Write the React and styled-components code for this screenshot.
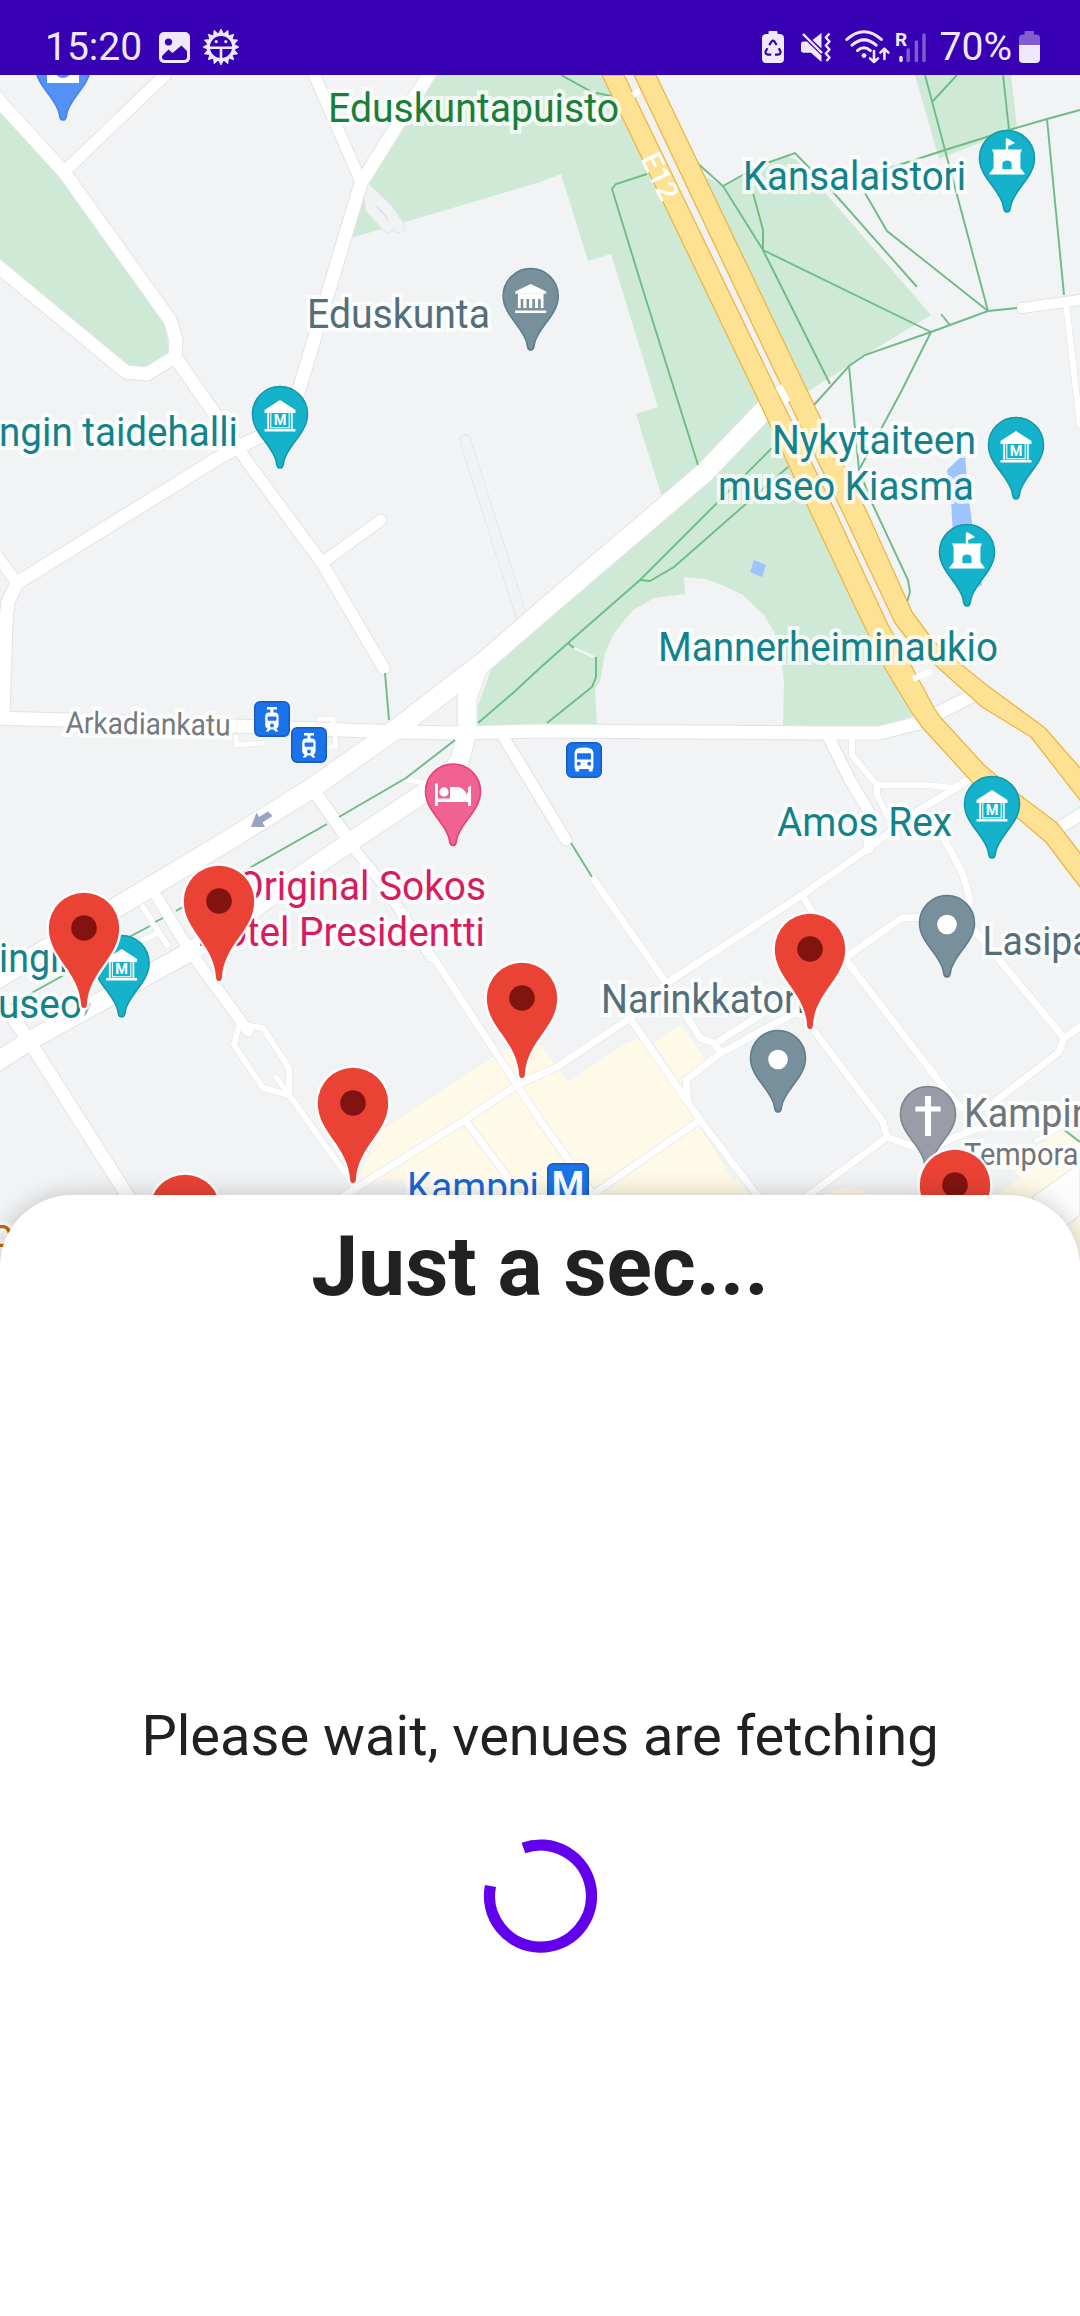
import React from "react";
import styled, { createGlobalStyle } from "styled-components";

const GlobalStyle = createGlobalStyle`
  html, body { margin: 0; padding: 0; background: #fff; }
  * { box-sizing: border-box; }
`;

const Screen = styled.main`
  display: flex;
  flex-direction: column;
  width: 1080px;
  height: 2316px;
  overflow: hidden;
  background: #fff;
  font-family: Roboto, "Noto Sans", sans-serif;
`;

/* ---------- status bar ---------- */

const StatusBar = styled.header`
  display: flex;
  justify-content: space-between;
  flex: none;
  height: 75px;
  padding: 19px 40px 0 45px;
  background: #3700b3;
  color: #efe9fb;
`;

const StatusGroup = styled.div`
  display: flex;
  align-items: center;
  height: 56px;
`;

const StatusText = styled.span`
  font-size: 39px;
  line-height: 56px;
  margin-right: ${(p) => p.$after}px;
`;

const StatusIcon = styled.svg`
  display: block;
  flex: none;
  overflow: visible;
  width: ${(p) => p.$w}px;
  height: ${(p) => p.$h}px;
  margin-right: ${(p) => p.$after || 0}px;
`;

const INK = "#efe9fb";
const BAR = "#3700b3";

function GalleryIcon() {
  return (
    <StatusIcon $w={31} $h={31} $after={13} viewBox="0 0 31 31">
      <rect width="31" height="31" rx="5" fill={INK} />
      <circle cx="9.5" cy="10" r="3.6" fill={BAR} />
      <path d="M3 24 L9.5 17.5 L13.5 21 L22.5 13.5 L28 19 V25 Q28 28 25 28 H6 Q3 28 3 25 Z" fill={BAR} />
    </StatusIcon>
  );
}

function BugGearIcon() {
  const teeth = Array.from({ length: 16 }, (_, i) => i * 22.5);
  return (
    <StatusIcon $w={36} $h={36} viewBox="-18 -18 36 36">
      {teeth.map((a) => (
        <path key={a} d="M-2.6 -13 L0 -18 L2.6 -13 Z" fill={INK} stroke={INK} strokeWidth="0.8" transform={`rotate(${a})`} />
      ))}
      <circle r="12.6" fill={BAR} stroke={INK} strokeWidth="3" />
      <path d="M-12 0.8 H12 M0 0.8 V12" stroke={INK} strokeWidth="2.6" />
      <circle cx="-4.8" cy="-5.4" r="1.6" fill={INK} />
      <circle cx="4.8" cy="-5.4" r="1.6" fill={INK} />
    </StatusIcon>
  );
}

function BatteryRecycleIcon() {
  return (
    <StatusIcon $w={22} $h={32} $after={17} viewBox="0 0 22 32">
      <path d="M6.5 3 V1 Q6.5 0 7.5 0 H14.5 Q15.5 0 15.5 1 V3 H18 Q22 3.4 22 7 V28 Q22 32 18 32 H4 Q0 32 0 28 V7 Q0 3.4 4 3 Z" fill={INK} />
      <g fill="none" stroke={BAR} strokeWidth="2.2">
        <path d="M7.2 14.2 L9.6 10.4 Q11 8.8 12.4 10.4 L14.6 14" />
        <path d="M16.8 17.2 L18.4 20.2 Q19 23.4 16 23.6 H13" />
        <path d="M9.2 23.6 H6 Q3 23.4 3.6 20.4 L5.4 17.2" />
      </g>
    </StatusIcon>
  );
}

function MuteVibrateIcon() {
  return (
    <StatusIcon $w={30} $h={30} $after={14} viewBox="0 0 30 30">
      <path d="M0 12 Q0 9.5 2.5 9.5 H6 L20.5 23.5 V30 L10 20.8 H2.5 Q0 20.8 0 18 Z" fill={INK} />
      <path d="M11.5 8 L20.5 1 V16.5 Z" fill={INK} />
      <path d="M2 2 L21 21" stroke={INK} strokeWidth="2.4" />
      <path d="M28.5 1.5 L24.8 5.5 L28.5 9.5 L24.8 13.5 L28.5 17.5 L24.8 21.5 L28.5 25.5 L25.5 29" fill="none" stroke={INK} strokeWidth="2.5" strokeLinejoin="round" />
    </StatusIcon>
  );
}

function WifiIcon() {
  return (
    <StatusIcon $w={44} $h={34} $after={7} viewBox="0 0 44 34">
      <g fill="none" stroke={INK} strokeWidth="3" strokeLinecap="round">
        <path d="M1.8 9.4 Q19 -6 36.4 9.4" />
        <path d="M7 15.2 Q19 4.6 31.2 15.2" />
        <path d="M12.4 20.6 Q19 14.8 25.4 20.6" />
      </g>
      <circle cx="19" cy="25.6" r="2.4" fill={INK} />
      <g fill="none" stroke={INK} strokeWidth="2.6" strokeLinecap="round" strokeLinejoin="round">
        <path d="M29 21 V31.6 M25 28.4 L29 32 L33 28.4" />
        <path d="M39.4 29 V19 M35.4 22.6 L39.4 18.8 L43.4 22.6" />
      </g>
    </StatusIcon>
  );
}

const RoamingText = styled.text`
  font: 700 19px Roboto, sans-serif;
  fill: ${INK};
`;

function SignalIcon() {
  return (
    <StatusIcon $w={30} $h={31} $after={14} viewBox="0 0 30 31">
      <RoamingText x="-1" y="13.5">R</RoamingText>
      <path d="M5 25.5 V28.5" stroke={INK} strokeWidth="3.4" strokeLinecap="round" />
      <path d="M12.2 18 V28.5 M20.4 10 V28.5 M28 3 V28.5" stroke={INK} strokeOpacity="0.4" strokeWidth="3.4" strokeLinecap="round" />
    </StatusIcon>
  );
}

function BatteryIcon() {
  return (
    <StatusIcon $w={21} $h={32} viewBox="0 0 21 32">
      <path d="M0 14 V7 Q0 3.4 4 3.4 H5.5 V1 Q5.5 0 6.5 0 H14 Q15 0 15 1 V3.4 H17 Q21 3.4 21 7 V14 Z" fill={INK} fillOpacity="0.4" />
      <path d="M0 14 H21 V28 Q21 32 17 32 H4 Q0 32 0 28 Z" fill={INK} />
    </StatusIcon>
  );
}

/* ---------- map ---------- */

const MapArea = styled.section`
  flex: none;
  height: 1120px;
  background: #f1f3f4;
`;

const MapCanvas = styled.svg`
  display: block;
  width: 1080px;
  height: 1260px;
`;

const MapLabel = styled.text`
  font-family: Roboto, sans-serif;
  font-size: ${(p) => p.$size || 40.5}px;
  fill: ${(p) => p.$color};
  stroke: rgba(255, 255, 255, 0.75);
  stroke-width: 8px;
  stroke-linejoin: miter;
  stroke-miterlimit: 2;
  paint-order: stroke;
`;

const PlainLabel = styled.text`
  font-family: Roboto, sans-serif;
  font-weight: ${(p) => p.$weight || 500};
  font-size: ${(p) => p.$size}px;
  fill: #fff;
`;

const TEAL = "#12838c";
const SLATE = "#546e7a";
const GREY = "#70757a";
const PINK = "#d81b60";

const parks = [
  "436,75 602,75 764,410 704,473 662,497 636,414 658,407 611,254 588,261 561,174 540,182 351,238 361,183",
  "764,410 710,480 540,627 492,667 478,705 478,728 879,728 915,715 886,670 855,607 807,505",
  "0,112 62,176 165,322 170,355 147,366 128,366 0,258",
  "703,175 723,186 788,156 797,160 931,315 865,355 807,392",
  "915,75 1011,75 1017,128 939,159",
];

const plaza =
  "597,728 595,688 600,682 605,653 614,633 633,610 654,598 685,594 684,577 705,579 722,585 743,595 764,615 774,632 782,663 784,683 783,728";

const blocks = [
  "382,1130 499,1053 522,1040 542,1047 568,1082 624,1044 640,1038 688,1108 733,1180 740,1177 752,1200 340,1200 358,1177",
  "654,1043 681,1024 707,1062 685,1078 686,1092",
  "826,1196 835,1190 846,1188 860,1190 872,1196",
  "995,1196 1020,1178 1008,1163 1046,1140 1060,1129 1080,1143 1080,1170 1032,1200",
  "1080,1215 1062,1228 1080,1270",
];

const water = [
  "947,470 962,456 965,456 969,500 973,530 982,585 978,587 953,535 951,500",
  "754,560 766,565 762,577 750,572",
];

const roads = [
  [6, "1066,303 1080,425"],
  [6, "852,735 852,755 877,785 926,785 953,788 972,777"],
  [6, "877,785 877,795 888,817"],
  [7, "975,775 953,790 919,810 869,848 802,895 667,983 630,1018 557,1067 517,1085 465,1120 356,1188 325,1208"],
  [7, "802,895 815,916"],
  [7, "815,1032 883,1122 887,1137 925,1151 960,1135 1000,1120"],
  [7, "887,1137 805,1198"],
  [7, "716,1043 760,1015 846,957 902,918 922,917 947,905"],
  [7, "846,960 955,1102 962,1108 988,1107 1059,1052 1064,1038 1080,1027"],
  [7, "976,932 1064,1038"],
  [7, "943,837 962,872 969,895 969,910"],
  [7, "592,877 669,987 700,1038 714,1043 721,1053"],
  [7, "800,1010 721,1053 686,1080 688,1100"],
  [7, "630,1018 700,1120 762,1202"],
  [7, "700,1120 592,1195"],
  [7, "434,958 517,1085 540,1120 597,1200"],
  [7, "465,1120 506,1175 518,1200"],
  [6, "289,1095 355,1187"],
  [6, "243,1025 263,1028 289,1068 289,1095 263,1088 234,1045 239,1025"],
  [5, "276,1077 289,1095"],
  [5, "236,737 236,745 263,743"],
  [5, "319,719 333,719 336,747 325,747"],
  [6, "143,907 167,945"],
  [5, "143,940 158,933"],
  [5, "403,779 425,783"],
  [4, "1036,1141 1062,1127"],
  [10, "355,850 382,883 431,957"],
  [11, "504,738 540,797 566,840"],
  [11, "829,738 850,780 869,812 869,848"],
  [10, "1022,308 1080,300"],
  [11.5, "238,447 246,460 322,563 384,669"],
  [11, "322,563 381,520"],
  [11.5, "165,75 64,172"],
  [13, "-5,95 0,102 64,172 170,320 176,340 175,357 238,447"],
  [13, "-5,264 0,268 126,372 147,374 175,357"],
  [11, "310,65 361,182"],
  [13, "433,68 361,183 298,393 285,425 238,447 215,460 17,583 8,602 6,620 3,718"],
  [11, "-3,556 17,583"],
  [11, "157,897 189,950 248,1031"],
  [12.5, "312,788 350,842"],
  [13, "8,1010 33,1047 129,1198 160,1250"],
  [12, "1054,831 1085,812"],
  [13, "-5,718 69,720 400,732 458,733 540,731 826,733 879,733 919,723 970,697"],
  [18.5, "478,668 467,698 467,733 459,763 436,785 350,842 193,950 31,1040 -5,1063"],
  [19.5, "772,402 704,473 540,613 486,660 399,727 312,788 229,840 -5,980"],
];

const alleys = [
  [10, "465,440 522,618"],
  [10, "369,192 371,209 388,227"],
  [10.5, "367,190 387,209 399,227"],
];

const paths = [
  "561,75 592,92 611,96",
  "647,174 616,184 612,189 643,290 698,465",
  "695,161 723,186 763,250 830,384",
  "723,186 741,176 767,163 795,153 833,192 917,287",
  "941,314 950,325",
  "753,193 763,230 763,250 931,332",
  "814,405 849,366 865,355 931,332 988,311 1017,308",
  "849,366 859,470 872,503 908,580 910,592 907,602",
  "931,332 902,390 859,470",
  "865,193 887,231 988,311",
  "925,75 945,150 988,311",
  "933,101 957,75",
  "1003,75 1009,130",
  "865,176 945,150 1009,130 1047,119 1080,110",
  "1047,119 1064,295",
  "772,448 640,580 568,643 540,668 513,693 478,723",
  "788,467 674,567 650,581 640,580",
  "568,643 574,648",
  "596,657 596,677 592,687 547,723",
  "385,673 389,720",
  "455,740 406,778 339,817",
  "327,824 253,866 176,911",
  "163,918 155,922",
  "150,926 129,937",
  "64,975 10,1005",
  "571,843 592,877",
  "1063,1129 1080,1142",
];

const median = "624,75 634,75 793,410 843,513 895,623 912,645 912,667 888,625 836,513 781,400";
const carriageways = [
  "602,75 624,75 786,410 836,513 888,625 912,667 934,708 941,718 984,765 1017,793 1057,823 1080,853 1100,880 1100,915 1080,887 1046,842 1020,820 972,782 922,727 912,713 886,670 855,607 807,505 764,412",
  "634,75 656,75 818,413 867,512 912,612 934,642 984,683 1045,728 1080,768 1100,790 1100,822 1080,800 1031,737 982,707 933,663 912,645 895,623 843,513 793,410",
];

const POI_PATH =
  "M0 0 C-2.6 0 -3 -2 -3.6 -5.5 C-6 -22 -27.5 -34 -27.5 -54 A27.5 27.5 0 0 1 27.5 -54 C27.5 -34 6 -22 3.6 -5.5 C3 -2 2.6 0 0 0 Z";
const VENUE_PATH =
  "M0 0 C-2 0 -2.6 -1 -2.8 -3 C-5 -38 -35.2 -50 -35.2 -80 A35.2 35.2 0 0 1 35.2 -80 C35.2 -50 5 -38 2.8 -3 C2.6 -1 2 0 0 0 Z";

const poiColors = {
  teal: ["#14b3cb", "#1598a8"],
  slate: ["#78909c", "#5f7d8a"],
  grey: ["#9a9da8", "#7f848c"],
  pink: ["#f06292", "#e54079"],
  blue: ["#5491f5", "#4a84e8"],
};

function MuseumGlyph() {
  return (
    <g>
      <path d="M0 -68 L15.5 -58 V-55 H-15.5 V-58 Z M-15.5 -39 H15.5 V-36.5 H-15.5 Z" fill="#fff" />
      <path d="M-11.8 -55 V-38 M11.8 -55 V-38" stroke="#fff" strokeWidth="1.8" />
      <rect x="-9.2" y="-56.4" width="18.4" height="16.2" fill="none" stroke="#fff" strokeWidth="1.1" />
      <PlainLabel x="0" y="-43" $size={14.5} $weight={700} textAnchor="middle">M</PlainLabel>
    </g>
  );
}

function CastleGlyph() {
  return (
    <path
      d="M-1.2 -73.5 H1 L8.2 -69 L1.2 -66 V-62.5 H15 L13.4 -58.5 V-44 L17.6 -38.5 V-37.5 H-17.6 V-38.5 L-13.4 -44 V-58.5 L-15 -62.5 H-1.2 Z M-4.6 -42.8 H4.6 V-48 Q4.6 -51.6 0 -51.6 Q-4.6 -51.6 -4.6 -48 Z"
      fill="#fff"
      fillRule="evenodd"
    />
  );
}

function ParliamentGlyph() {
  return (
    <g fill="#fff">
      <path d="M0 -66 L15.5 -58.4 V-56.2 H-15.5 V-58.4 Z M-15.5 -39.6 H15.5 V-37 H-15.5 Z" />
      <path d="M-12.800 -56.500 H12.800 V-42 H10 V-51 H1.600 V-42 H-1.600 V-51 H-10 V-42 H-12.800 Z" />
      <path d="M-7.400 -51 H-4.200 V-42 H-7.400 Z M4.200 -51 H7.400 V-42 H4.200 Z" />
    </g>
  );
}

function BedGlyph() {
  return (
    <g fill="#fff">
      <path d="M-18 -62 H-15.2 V-47 H15.2 V-58 L18 -60 V-39.6 H15.2 V-43.4 H-15.2 V-39.6 H-18 Z" />
      <circle cx="-9" cy="-53.6" r="4.6" />
      <path d="M-3 -58.6 H5 Q12 -57 13.6 -51 L15.8 -55 V-46 H-3 Z" />
    </g>
  );
}

const glyphs = {
  museum: <MuseumGlyph />,
  castle: <CastleGlyph />,
  parliament: <ParliamentGlyph />,
  bed: <BedGlyph />,
  dot: <circle cy="-52.5" r="9.8" fill="#fff" />,
  cross: <path d="M-3 -72 H3 V-61.6 H12.6 V-56.4 H3 V-32 H-3 V-56.4 H-12.6 V-61.6 H-3 Z" fill="#fff" />,
  camera: (
    <g>
      <rect x="-16" y="-58" width="32" height="21" fill="#fff" />
      <circle cy="-50" r="6.6" fill="none" stroke="#5491f5" strokeWidth="3" />
    </g>
  ),
};

function Poi({ x, y, tone, glyph }) {
  const [fill, edge] = poiColors[tone];
  return (
    <g transform={`translate(${x} ${y})`}>
      <path d={POI_PATH} fill={fill} stroke={edge} strokeWidth="1.6" />
      {glyphs[glyph]}
    </g>
  );
}

function VenuePin({ x, y }) {
  return (
    <g transform={`translate(${x} ${y})`}>
      <path d={VENUE_PATH} fill="#ea4335" stroke="#fff" strokeOpacity="0.9" strokeWidth="5" paintOrder="stroke" />
      <circle cy="-80" r="12.8" fill="#811411" />
    </g>
  );
}

function Badge({ x, y, w = 36, children }) {
  return (
    <g transform={`translate(${x} ${y})`}>
      <rect x="0.7" y="0.7" width={w - 1.4} height={w - 1.4} rx="5.5" fill="#1a73e8" stroke="#185abc" strokeWidth="1.4" />
      {children}
    </g>
  );
}

const tramGlyph = (
  <g>
    <path
      d="M13 6 H23 V8.4 H19.4 V11.4 H21 Q24.4 11.8 24.6 15 V24 Q24.6 27 22.4 27.8 L24.4 30.4 H21.4 L19.8 28.4 H16.2 L14.6 30.4 H11.6 L13.6 27.8 Q11.2 27 11.2 24 V15 Q11.4 11.8 14.8 11.4 H16.4 V8.4 H13 Z"
      fill="#fff"
    />
    <rect x="13.6" y="15.4" width="8.8" height="4.4" rx="0.8" fill="#1a73e8" />
    <circle cx="18" cy="24.4" r="2" fill="#1a73e8" />
  </g>
);

const busGlyph = (
  <g>
    <path
      d="M8.6 11 Q8.6 5.6 18 5.6 Q27.4 5.6 27.4 11 V25.4 Q27.4 26.6 26.6 27 V29.4 H22.8 V27 H13.2 V29.4 H9.4 V27 Q8.6 26.6 8.6 25.4 Z"
      fill="#fff"
    />
    <rect x="11" y="11.2" width="14" height="6.2" rx="0.6" fill="#1a73e8" />
    <circle cx="12.8" cy="21.8" r="2" fill="#1a73e8" />
    <circle cx="23.2" cy="21.8" r="2" fill="#1a73e8" />
  </g>
);

const pois = [
  { x: 63, y: 120, tone: "blue", glyph: "camera" },
  { x: 530.7, y: 350, tone: "slate", glyph: "parliament" },
  { x: 1007, y: 212, tone: "teal", glyph: "castle" },
  { x: 280, y: 468, tone: "teal", glyph: "museum" },
  { x: 1016, y: 499, tone: "teal", glyph: "museum" },
  { x: 967, y: 606, tone: "teal", glyph: "castle" },
  { x: 992, y: 858, tone: "teal", glyph: "museum" },
  { x: 947, y: 977, tone: "slate", glyph: "dot" },
  { x: 778, y: 1112, tone: "slate", glyph: "dot" },
  { x: 928, y: 1168, tone: "grey", glyph: "cross" },
  { x: 453, y: 845.5, tone: "pink", glyph: "bed" },
  { x: 121.6, y: 1017, tone: "teal", glyph: "museum" },
];

const venues = [
  { x: 219, y: 981 },
  { x: 84, y: 1008 },
  { x: 810, y: 1029 },
  { x: 522, y: 1078 },
  { x: 353, y: 1183 },
  { x: 955, y: 1265 },
  { x: 185, y: 1290 },
];

const labels = [
  { text: "Eduskuntapuisto", x: 328, y: 121.5, w: 291, color: "#188038" },
  { text: "Eduskunta", x: 307, y: 327.5, w: 183, color: SLATE },
  { text: "ngin taidehalli", x: -1, y: 446, w: 239, color: TEAL },
  { text: "Kansalaistori", x: 743, y: 189.5, w: 223, color: TEAL },
  { text: "Nykytaiteen", x: 772, y: 454, w: 204, color: TEAL },
  { text: "museo Kiasma", x: 718, y: 499.5, w: 256, color: TEAL },
  { text: "Mannerheiminaukio", x: 658, y: 660.5, w: 340, color: TEAL },
  { text: "Arkadiankatu", x: 65.5, y: 733, w: 165, color: "#757a80", size: 30.5, angle: 0.9 },
  { text: "Original Sokos", x: 237, y: 900, w: 249, color: PINK },
  { text: "Hotel Presidentti", x: 197, y: 946, w: 288, color: PINK },
  { text: "ingin", x: -1, y: 971.7, w: 81, color: TEAL },
  { text: "useo", x: -2, y: 1017.7, w: 84, color: TEAL },
  { text: "Amos Rex", x: 777, y: 835.7, w: 175, color: TEAL },
  { text: "Lasipa", x: 982.5, y: 954.7, w: 110, color: SLATE },
  { text: "Narinkkatori", x: 601, y: 1012.7, w: 205, color: SLATE },
  { text: "Kampin", x: 964, y: 1126.7, w: 128.5, color: GREY },
  { text: "Temporarily", x: 964, y: 1164.5, w: 152, color: GREY, size: 31 },
  { text: "Kamppi", x: 407, y: 1201, w: 132, color: "#1967d2" },
  { text: "c", x: -9, y: 1247, color: "#c5680f" },
];

function CityMap() {
  return (
    <MapCanvas viewBox="0 75 1080 1260">
      <rect y="75" width="1080" height="1260" fill="#f1f3f4" />
      {parks.map((p) => <polygon key={p} points={p} fill="#ceead6" />)}
      <polygon points={plaza} fill="#f1f3f4" />
      {blocks.map((p) => <polygon key={p} points={p} fill="#fff9e8" />)}
      <polygon points="350,1200 364,1187 385,1179 402,1181 414,1200" fill="#f1f3f4" />
      <polygon points="1032,1197 1080,1163 1080,1215 1055,1235" fill="#fdfdfd" stroke="#dedfe1" />
      {water.map((p) => <polygon key={p} points={p} fill="#9fc3fc" />)}

      <g fill="none" strokeLinecap="round" strokeLinejoin="round">
        {alleys.map(([w, p]) => <polyline key={p} points={p} stroke="#e3e5e8" strokeWidth={w + 1.8} />)}
        {alleys.map(([w, p]) => <polyline key={p} points={p} stroke="#f0f2f3" strokeWidth={w} />)}
        {roads.map(([w, p]) => <polyline key={p} points={p} stroke="#e1e3e6" strokeWidth={w + (w > 8 ? 2 : 1.2)} />)}
        {roads.map(([w, p]) => <polyline key={p} points={p} stroke="#fff" strokeWidth={w} />)}
        <path d="M377 207 Q383 211 388 220" stroke="#dfe1e4" strokeWidth="1.2" />
      </g>

      <g fill="none" stroke="#6fbb86" strokeWidth="1.9">
        {paths.map((p) => <polyline key={p} points={p} />)}
      </g>
      <path d="M574 648 L594 657 M917 287 L941 314" stroke="#f4f7f5" strokeWidth="2.4" />

      <polygon points={median} fill="#f1f1ef" />
      {carriageways.map((p) => <polygon key={p} points={p} fill="#fde293" stroke="#ecb646" strokeWidth="1.3" />)}
      <path d="M633 95 L640 91 M913 679 L932 671" stroke="#fff" strokeWidth="6" />
      <path d="M778.5 386 L787 402" stroke="#fff" strokeWidth="7" />

      <polygon points="251,827 256.5,812.5 259,817 268,811.5 272.5,816 262.5,822.5 265,827" fill="#9aa3c2" />
      <polygon points="84,1017 87,1004 91,1003 87,1013" fill="#9aa3c2" />

      <PlainLabel $size={29} textAnchor="middle" transform="translate(651 181) rotate(64)">E12</PlainLabel>

      {labels.map((l) => (
        <MapLabel
          key={l.text}
          x={l.x}
          y={l.y}
          $size={l.size}
          $color={l.color}
          textLength={l.w}
          lengthAdjust="spacingAndGlyphs"
          transform={l.angle ? `rotate(${l.angle} ${l.x} ${l.y})` : undefined}
        >
          {l.text}
        </MapLabel>
      ))}

      <Badge x={254} y={701}>{tramGlyph}</Badge>
      <Badge x={291} y={727}>{tramGlyph}</Badge>
      <Badge x={566} y={742}>{busGlyph}</Badge>
      <Badge x={547} y={1163} w={42}>
        <PlainLabel x="21" y="34" $size={37} $weight={700} textAnchor="middle">M</PlainLabel>
      </Badge>

      {pois.map((p) => <Poi key={`${p.x}-${p.y}`} {...p} />)}
      {venues.map((v) => <VenuePin key={`${v.x}-${v.y}`} {...v} />)}
    </MapCanvas>
  );
}

/* ---------- bottom sheet ---------- */

const Sheet = styled.section`
  position: relative;
  z-index: 1;
  display: flex;
  flex-direction: column;
  align-items: center;
  flex: 1;
  padding-top: 22px;
  border-radius: 72px 72px 0 0;
  background: #fff;
  box-shadow: 0 2px 26px rgba(0, 0, 0, 0.24);
  color: #212121;
`;

const Title = styled.h1`
  margin: 0;
  font-size: 84px;
  font-weight: 700;
  line-height: 100px;
`;

const Loading = styled.div`
  display: flex;
  flex-direction: column;
  align-items: center;
  gap: 67px;
  margin-top: 383px;
`;

const Message = styled.p`
  margin: 0;
  font-size: 56px;
  line-height: 72px;
`;

const Spinner = styled.svg`
  display: block;
  width: 114px;
  height: 114px;
`;

export default function App() {
  return (
    <Screen>
      <GlobalStyle />
      <StatusBar>
        <StatusGroup>
          <StatusText $after={17}>15:20</StatusText>
          <GalleryIcon />
          <BugGearIcon />
        </StatusGroup>
        <StatusGroup>
          <BatteryRecycleIcon />
          <MuteVibrateIcon />
          <WifiIcon />
          <SignalIcon />
          <StatusText $after={7}>70%</StatusText>
          <BatteryIcon />
        </StatusGroup>
      </StatusBar>
      <MapArea>
        <CityMap />
      </MapArea>
      <Sheet>
        <Title>Just a sec...</Title>
        <Loading>
          <Message>Please wait, venues are fetching</Message>
          <Spinner viewBox="-57.5 -57 114 114" fill="none">
            <path d="M-17.1 -48 A51 51 0 1 1 -50 -10" stroke="#6200ee" strokeWidth="11.3" />
          </Spinner>
        </Loading>
      </Sheet>
    </Screen>
  );
}
